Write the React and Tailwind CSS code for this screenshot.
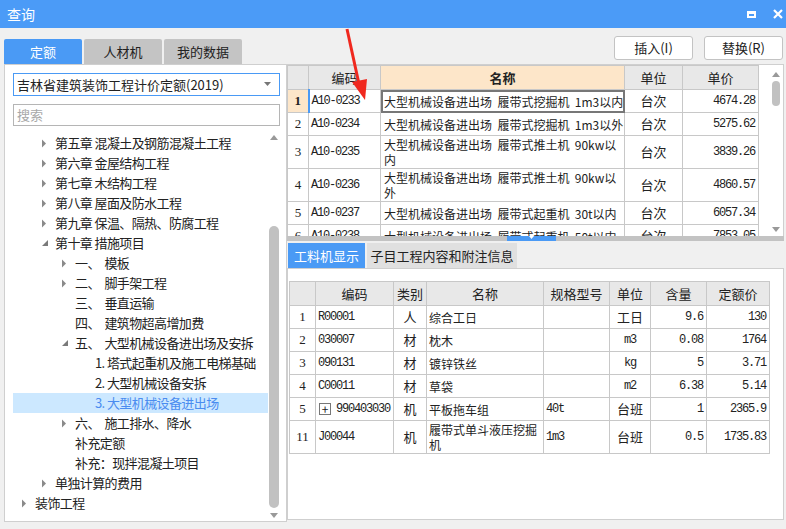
import React from 'react';

const CJK = { fontFamily: '"Noto Sans CJK SC", "Microsoft YaHei", sans-serif' };
const MONO = { fontFamily: '"Liberation Mono", monospace', letterSpacing: '-1.2px' };
const SERIF = { fontFamily: '"Liberation Serif", serif' };

const Closed = () => (
  <svg width="6" height="9" viewBox="0 0 6 9" className="shrink-0"><path d="M1 0.5 L5 4.5 L1 8.5 Z" fill="#8a8a8a" /></svg>
);
const Open = () => (
  <svg width="8" height="8" viewBox="0 0 8 8" className="shrink-0"><path d="M7 1 L7 7 L1 7 Z" fill="#7a7a7a" /></svg>
);

const tree = [
  { lv: 1, icon: 'c', text: '第五章 混凝土及钢筋混凝土工程' },
  { lv: 1, icon: 'c', text: '第六章 金屋结构工程' },
  { lv: 1, icon: 'c', text: '第七章 木结构工程' },
  { lv: 1, icon: 'c', text: '第八章 屋面及防水工程' },
  { lv: 1, icon: 'c', text: '第九章 保温、隔热、防腐工程' },
  { lv: 1, icon: 'o', text: '第十章 措施项目' },
  { lv: 2, icon: 'c', text: '一、  模板' },
  { lv: 2, icon: 'c', text: '二、  脚手架工程' },
  { lv: 2, icon: '', text: '三、  垂直运输' },
  { lv: 2, icon: '', text: '四、  建筑物超高增加费' },
  { lv: 2, icon: 'o', text: '五、  大型机械设备进出场及安拆' },
  { lv: 3, icon: '', text: '1. 塔式起重机及施工电梯基础' },
  { lv: 3, icon: '', text: '2. 大型机械设备安拆' },
  { lv: 3, icon: '', text: '3. 大型机械设备进出场', sel: true },
  { lv: 2, icon: 'c', text: '六、  施工排水、降水' },
  { lv: 2, icon: '', text: '补充定额' },
  { lv: 2, icon: '', text: '补充：现拌混凝土项目' },
  { lv: 1, icon: 'c', text: '单独计算的费用' },
  { lv: 0, icon: 'c', text: '装饰工程' },
];

const indent = { 0: 'pl-[17px]', 1: 'pl-[37px]', 2: 'pl-[57px]', 3: 'pl-[77px]' };

const quotas = [
  { n: '1', code: 'A10-0233', name: ['大型机械设备进出场  履带式挖掘机  1m3以内'], price: '4674.28', h: 'h-[23px]' },
  { n: '2', code: 'A10-0234', name: ['大型机械设备进出场  履带式挖掘机  1m3以外'], price: '5275.62', h: 'h-[23px]' },
  { n: '3', code: 'A10-0235', name: ['大型机械设备进出场  履带式推土机  90kw以', '内'], price: '3839.26', h: 'h-[33px]' },
  { n: '4', code: 'A10-0236', name: ['大型机械设备进出场  履带式推土机  90kw以', '外'], price: '4860.57', h: 'h-[33px]' },
  { n: '5', code: 'A10-0237', name: ['大型机械设备进出场  履带式起重机  30t以内'], price: '6057.34', h: 'h-[23px]' },
  { n: '6', code: 'A10-0238', name: ['大型机械设备进出场  履带式起重机  50t以内'], price: '7853.05', h: 'h-[23px]' },
];

const items = [
  { n: '1', code: 'R00001', kind: '人', name: ['综合工日'], spec: '', unit: '工日', qty: '9.6', price: '130' },
  { n: '2', code: '030007', kind: '材', name: ['枕木'], spec: '', unit: 'm3', qty: '0.08', price: '1764' },
  { n: '3', code: '090131', kind: '材', name: ['镀锌铁丝'], spec: '', unit: 'kg', qty: '5', price: '3.71' },
  { n: '4', code: 'C00011', kind: '材', name: ['草袋'], spec: '', unit: 'm2', qty: '6.38', price: '5.14' },
  { n: '5', code: '990403030', kind: '机', name: ['平板拖车组'], spec: '40t', unit: '台班', qty: '1', price: '2365.9', plus: true },
  { n: '11', code: 'J00044', kind: '机', name: ['履带式单斗液压挖掘', '机'], spec: '1m3', unit: '台班', qty: '0.5', price: '1735.83', tall: true },
];

const td = 'border border-[#c8c8c8] p-0';

const Lines = ({ lines }) => (
  <div className="whitespace-pre leading-[15px]">
    {lines.map((l, i) => <div key={i}>{l}</div>)}
  </div>
);

export default function App() {
  return (
    <div className="relative w-[786px] h-[529px] overflow-hidden bg-[#f0f0f0] text-[#222] text-[12px]" style={CJK}>
      {/* title bar */}
      <div className="h-[28px] bg-[#4b9bf7] flex items-center justify-between pl-[7px] pr-[3px]">
        <span className="text-white text-[14px]">查询</span>
        <div className="flex items-center gap-[17px]">
          <div className="w-[9px] h-[7px] border-[2px] border-t-[3px] border-white" />
          <svg width="10" height="10" viewBox="0 0 10 10"><path d="M1 1 L9 9 M9 1 L1 9" stroke="white" strokeWidth="2.2" /></svg>
        </div>
      </div>

      {/* tabs + buttons */}
      <div className="h-[36px] flex items-end justify-between pl-[4px] pr-[3px]">
        <div className="flex gap-[2px]">
          <div className="w-[78px] h-[25px] bg-[#4a9af5] text-white text-[13px] flex items-center justify-center rounded-t-[2px]">定额</div>
          <div className="w-[78px] h-[25px] bg-[#c4c4c4] text-[13px] flex items-center justify-center rounded-t-[2px]">人材机</div>
          <div className="w-[78px] h-[25px] bg-[#c4c4c4] text-[13px] flex items-center justify-center rounded-t-[2px]">我的数据</div>
        </div>
        <div className="flex gap-[11px] self-start mt-[8px]">
          <div className="w-[79px] h-[24px] bg-white border border-[#c3c3c3] rounded-[3px] text-[13px] flex items-center justify-center">插入(I)</div>
          <div className="w-[79px] h-[24px] bg-white border border-[#c3c3c3] rounded-[3px] text-[13px] flex items-center justify-center">替换(R)</div>
        </div>
      </div>

      <div className="flex h-[458px] pl-[4px] pr-[2px]">
        {/* left panel */}
        <div className="w-[283px] h-full bg-white border border-[#cfcfcf] flex flex-col pl-[8px] pr-[6px] pt-[8px]">
          <div className="h-[26px] border border-[#4a9af5] flex items-center justify-between pl-[3px] pr-[8px] text-[13px]">
            <span>吉林省建筑装饰工程计价定额(2019)</span>
            <svg width="7" height="4" viewBox="0 0 7 4"><path d="M0 0 L7 0 L3.5 4 Z" fill="#777" /></svg>
          </div>
          <div className="h-[25px] mt-[8px] border border-[#b5b5b5] flex items-center pl-[3px] text-[13px] text-[#a8a8a8]">搜索</div>
          <div className="flex flex-1 mt-[3px] -ml-[9px] pb-[3px]">
            <div className="flex-1 pt-[4px]">
              {tree.map((t, i) => (
                <div key={i} className={`h-[20px] flex items-center text-[13px] tracking-[-0.6px] ${t.sel ? 'bg-[#cce8ff] text-[#4a8cf0] ml-[9px] pl-[82px]' : `${indent[t.lv]}`}`}>
                  {!t.sel && (
                    <span className="w-[14px] flex items-center">
                      {t.icon === 'c' && <Closed />}
                      {t.icon === 'o' && <Open />}
                    </span>
                  )}
                  <span className="whitespace-pre">{t.text}</span>
                </div>
              ))}
            </div>
            <div className="w-[12px] flex flex-col items-center">
              <svg width="8" height="5" viewBox="0 0 8 5" className="mt-[6px]"><path d="M0 5 L8 5 L4 0 Z" fill="#999" /></svg>
              <div className="w-[10px] h-[282px] mt-[86px] bg-[#c1c1c1] rounded-full" />
              <svg width="8" height="5" viewBox="0 0 8 5" className="mt-[5px]"><path d="M0 0 L8 0 L4 5 Z" fill="#999" /></svg>
            </div>
          </div>
        </div>

        {/* right panel */}
        <div className="flex-1 flex flex-col">
          <div className="h-[172px] bg-white border-t border-r border-[#cfcfcf] flex overflow-hidden">
            <table className="border-collapse table-fixed w-[471px] self-start">
              <colgroup>
                <col className="w-[21px]" /><col className="w-[72px]" /><col className="w-[244px]" /><col className="w-[58px]" /><col className="w-[76px]" />
              </colgroup>
              <thead>
                <tr className="h-[24px] bg-[#e8e8e8] text-[13px]">
                  <th className={`${td} font-normal`} />
                  <th className={`${td} font-normal`}>编码</th>
                  <th className={`${td} bg-[#fde6c9] font-bold`}>名称</th>
                  <th className={`${td} font-normal`}>单位</th>
                  <th className={`${td} font-normal`}>单价</th>
                </tr>
              </thead>
              <tbody>
                {quotas.map((q, i) => (
                  <tr key={i} className={q.h}>
                    <td className={`${td} text-center text-[13px] ${i === 0 ? 'bg-[#fde6c9] font-bold' : ''}`} style={SERIF}>{q.n}</td>
                    <td className={`${td} pl-[2px] text-[12px] ${i === 0 ? 'border-l-[2px] border-l-[#4a9af5]' : ''}`} style={MONO}>{q.code}</td>
                    <td className={`${td} pl-[3px] text-[12px] ${i === 0 ? 'outline outline-[2px] -outline-offset-[2px] outline-[#777]' : ''}`}><Lines lines={q.name} /></td>
                    <td className={`${td} text-center text-[13px]`}>台次</td>
                    <td className={`${td} text-right pr-[3px] text-[12px]`} style={MONO}>{q.price}</td>
                  </tr>
                ))}
              </tbody>
            </table>
            <div className="flex-1" />
            <div className="w-[14px] flex flex-col items-center">
              <svg width="8" height="5" viewBox="0 0 8 5" className="mt-[7px]"><path d="M0 5 L8 5 L4 0 Z" fill="#999" /></svg>
              <div className="w-[8px] h-[25px] mt-[4px] bg-[#c1c1c1] rounded-full" />
              <div className="flex-1" />
              <svg width="8" height="5" viewBox="0 0 8 5" className="mb-[4px]"><path d="M0 0 L8 0 L4 5 Z" fill="#999" /></svg>
            </div>
          </div>
          {/* splitter */}
          <div className="h-[5px] bg-[#c3c3c3] flex justify-center">
            <div className="w-[49px] h-full bg-[#4a9af5] ml-[-8px] flex justify-center">
              <svg width="5" height="3" viewBox="0 0 5 3"><path d="M0 0 L5 0 L2.5 3 Z" fill="white" /></svg>
            </div>
          </div>
          <div className="flex gap-[2px] pt-[2px] pl-[1px]">
            <div className="w-[77px] h-[25px] bg-[#4a9af5] text-white text-[13px] flex items-center justify-center">工料机显示</div>
            <div className="w-[150px] h-[25px] bg-[#e0e0e0] text-[13px] flex items-center justify-center">子目工程内容和附注信息</div>
          </div>
          <div className="flex-1 bg-white border border-[#cfcfcf] mb-[2px] pt-[12px] pl-[1px]">
            <table className="border-collapse table-fixed w-[480px]">
              <colgroup>
                <col className="w-[26px]" /><col className="w-[78px]" /><col className="w-[33px]" /><col className="w-[117px]" /><col className="w-[66px]" /><col className="w-[41px]" /><col className="w-[56px]" /><col className="w-[63px]" />
              </colgroup>
              <thead>
                <tr className="h-[24px] bg-[#e8e8e8] text-[13px]">
                  <th className={`${td} font-normal`} />
                  <th className={`${td} font-normal`}>编码</th>
                  <th className={`${td} font-normal`}>类别</th>
                  <th className={`${td} font-normal`}>名称</th>
                  <th className={`${td} font-normal`}>规格型号</th>
                  <th className={`${td} font-normal`}>单位</th>
                  <th className={`${td} font-normal`}>含量</th>
                  <th className={`${td} font-normal`}>定额价</th>
                </tr>
              </thead>
              <tbody>
                {items.map((r, i) => (
                  <tr key={i} className={r.tall ? 'h-[33px]' : 'h-[23px]'}>
                    <td className={`${td} text-center text-[13px]`} style={SERIF}>{r.n}</td>
                    <td className={`${td} pl-[2px] text-[12px]`} style={MONO}>
                      {r.plus ? (
                        <span className="flex items-center gap-[5px] pl-[1px]">
                          <span className="w-[12px] h-[12px] border border-[#777] flex items-center justify-center text-[12px] leading-none tracking-normal" style={CJK}>+</span>
                          {r.code}
                        </span>
                      ) : r.code}
                    </td>
                    <td className={`${td} text-center text-[13px]`}>{r.kind}</td>
                    <td className={`${td} pl-[2px] text-[12px]`}><Lines lines={r.name} /></td>
                    <td className={`${td} pl-[2px] text-[12px]`} style={MONO}>{r.spec}</td>
                    <td className={`${td} text-center ${/[a-z]/.test(r.unit) ? 'text-[12px]' : 'text-[13px]'}`} style={/[a-z]/.test(r.unit) ? MONO : undefined}>{r.unit}</td>
                    <td className={`${td} text-right pr-[3px] text-[12px]`} style={MONO}>{r.qty}</td>
                    <td className={`${td} text-right pr-[3px] text-[12px]`} style={MONO}>{r.price}</td>
                  </tr>
                ))}
              </tbody>
            </table>
          </div>
        </div>
      </div>

      {/* red annotation arrow */}
      <svg className="absolute left-0 top-0 pointer-events-none" width="786" height="529">
        <line x1="347" y1="29" x2="359" y2="84" stroke="#f0281e" strokeWidth="3" />
        <path d="M352 82 L365 100 L367 79 Z" fill="#f0281e" />
      </svg>
    </div>
  );
}
